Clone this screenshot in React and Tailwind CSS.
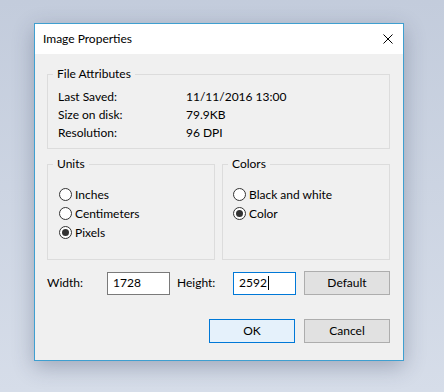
const Radio = ({ label, checked }) => (
    <div className="flex items-center h-[19px]">
        <span className="w-[13px] h-[13px] rounded-full border border-[#333333] bg-white flex items-center justify-center">
            {checked && <span className="w-[7px] h-[7px] rounded-full bg-[#333333]" />}
        </span>
        <span className="ml-[3px]">{label}</span>
    </div>
);

const Group = ({ title, className = '', children }) => (
    <fieldset className={`border border-[#dcdcdc] ${className}`}>
        <legend className="ml-[5px] px-[4px] leading-[16px]">{title}</legend>
        {children}
    </fieldset>
);

const App = () => {
    const attributes = [
        { label: 'Last Saved:', value: '11/11/2016 13:00' },
        { label: 'Size on disk:', value: '79.9KB' },
        { label: 'Resolution:', value: '96 DPI' }
    ];

    return (
        <div
            className="w-[444px] h-[392px] overflow-hidden bg-gradient-to-b from-[#c3ccdc] to-[#d6dde9] pt-[23px] pl-[34px] text-[12px] text-black"
            style={{ fontFamily: 'Lato, "Liberation Sans", sans-serif' }}
        >
            <div className="w-[370px] h-[338px] border border-[#3f9fd0] bg-[#f0f0f0] shadow-[0_6px_20px_rgba(40,50,80,0.3)] flex flex-col">
                <div className="h-[30px] bg-white flex items-center justify-between pl-[8px] pr-[10px] shrink-0">
                    <span>Image Properties</span>
                    <svg width="10" height="10" viewBox="0 0 10 10">
                        <path d="M0.5 0.5L9.5 9.5M9.5 0.5L0.5 9.5" stroke="#000" strokeWidth="1" />
                    </svg>
                </div>

                <div className="pl-[12px] pr-[13px] pt-[12px] flex flex-col">
                    <Group title="File Attributes">
                        <div className="pl-[10px] pt-[6px] pb-[6px]">
                            {attributes.map((row) => (
                                <div key={row.label} className="flex h-[18px] items-center">
                                    <span className="w-[128px]">{row.label}</span>
                                    <span>{row.value}</span>
                                </div>
                            ))}
                        </div>
                    </Group>

                    <div className="flex gap-[7px] mt-[7px]">
                        <Group title="Units" className="w-[168px]">
                            <div className="pl-[11px] pt-[13px] pb-[17px]">
                                <Radio label="Inches" />
                                <Radio label="Centimeters" />
                                <Radio label="Pixels" checked />
                            </div>
                        </Group>
                        <Group title="Colors" className="w-[168px]">
                            <div className="pl-[10px] pt-[13px]">
                                <Radio label="Black and white" />
                                <Radio label="Color" checked />
                            </div>
                        </Group>
                    </div>

                    <div className="flex items-center mt-[11px]">
                        <span className="w-[60px]">Width:</span>
                        <div className="w-[63px] h-[23px] border border-[#7a7a7a] bg-white flex items-center pl-[5px]">1728</div>
                        <span className="w-[56px] ml-[7px]">Height:</span>
                        <div className="w-[63px] h-[23px] border border-[#0078d7] bg-white flex items-center pl-[5px]">
                            2592
                            <span className="w-px h-[14px] bg-black ml-px" />
                        </div>
                        <button className="ml-auto w-[86px] h-[24px] border border-[#adadad] bg-[#e1e1e1]">Default</button>
                    </div>

                    <div className="flex justify-end gap-[9px] mt-[24px]">
                        <button className="w-[86px] h-[24px] border border-[#0078d7] bg-[#e5f1fb]">OK</button>
                        <button className="w-[86px] h-[24px] border border-[#adadad] bg-[#e1e1e1]">Cancel</button>
                    </div>
                </div>
            </div>
        </div>
    );
};

export default App;
